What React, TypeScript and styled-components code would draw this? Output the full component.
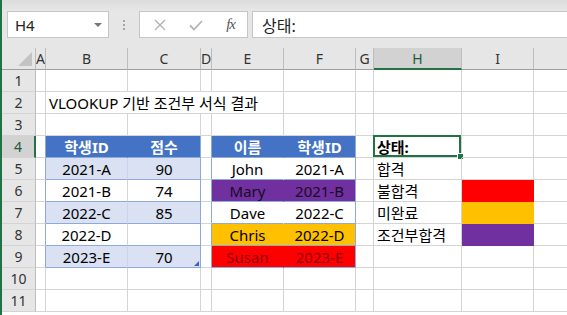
import styled, { createGlobalStyle } from "styled-components";

const GlobalStyle = createGlobalStyle`
  html, body {
    margin: 0;
    padding: 0;
    background: #ffffff;
  }
  body {
    font-family: "Noto Sans", "Noto Sans CJK KR", sans-serif;
  }
`;

const GRID = "#d4d4d4";
const BLUE = "#4472c4";
const BAND = "#d9e1f2";
const LINE = "#8ea9db";
const GREEN = "#217346";
const PURPLE = "#7030a0";
const ORANGE = "#ffc000";
const RED = "#ff0000";

const Window = styled.div`
  width: 567px;
  height: 315px;
  overflow: hidden;
  border-left: 2px solid ${GREEN};
  box-sizing: border-box;
  background: #ffffff;
`;

const Toolbar = styled.div`
  height: 48px;
  box-sizing: border-box;
  padding: 11px 0 10px 5px;
  display: flex;
  align-items: stretch;
  background: linear-gradient(#dcdcdc 0px, #e6e6e6 10px);
`;

const Box = styled.div`
  background: #ffffff;
  border: 1px solid #c6c6c6;
  box-sizing: border-box;
  display: flex;
  align-items: center;
`;

const NameBox = styled(Box)`
  width: 102px;
  padding: 0 6px 0 7px;
  justify-content: space-between;
  font-size: 15px;
  color: #222;
`;

const Arrow = styled.span`
  width: 0;
  height: 0;
  border-left: 4px solid transparent;
  border-right: 4px solid transparent;
  border-top: 4px solid #777;
`;

const Grip = styled.div`
  width: 30px;
  display: flex;
  flex-direction: column;
  align-items: center;
  justify-content: center;
  gap: 2px;
`;

const Dot = styled.span`
  width: 2px;
  height: 2px;
  background: #a6a6a6;
`;

const FxBox = styled(Box)`
  width: 109px;
  padding: 0 12px 0 14px;
  justify-content: space-between;
`;

const Fx = styled.span`
  font-family: "Liberation Serif", "DejaVu Serif", serif;
  font-style: italic;
  font-size: 15px;
  color: #555;
  letter-spacing: -1px;
`;

const FormulaBox = styled(Box)`
  flex: 1;
  margin-left: 4px;
  border-right: none;
  padding-left: 9px;
  font-size: 16px;
  color: #222;
`;

const Sheet = styled.div`
  display: grid;
  grid-template-columns: 34px 10px 82px 73px 11px 72px 72px 18px 88px 72px 72px;
  grid-template-rows: 22px;
  grid-auto-rows: 22px;
`;

const Corner = styled.div`
  background: #e6e6e6;
  border-right: 1px solid #bdbdbd;
  border-bottom: 1px solid #9f9f9f;
  box-sizing: border-box;
  display: flex;
  align-items: flex-end;
  justify-content: flex-end;
  padding: 0 3px 3px 0;
`;

const CornerMark = styled.span`
  width: 0;
  height: 0;
  border-left: 14px solid transparent;
  border-bottom: 14px solid #c3c3c3;
`;

const ColHead = styled.div<{ $on?: boolean }>`
  background: ${(p) => (p.$on ? "#d2d2d2" : "#e6e6e6")};
  border-right: 1px solid #bdbdbd;
  border-bottom: ${(p) => (p.$on ? `2px solid ${GREEN}` : "1px solid #9f9f9f")};
  box-sizing: border-box;
  display: flex;
  align-items: center;
  justify-content: center;
  font-size: 14px;
  color: ${(p) => (p.$on ? "#1d5b38" : "#333")};
  overflow: hidden;
`;

const RowHead = styled.div<{ $on?: boolean }>`
  background: ${(p) => (p.$on ? "#d2d2d2" : "#e6e6e6")};
  border-right: ${(p) => (p.$on ? `2px solid ${GREEN}` : "1px solid #bdbdbd")};
  border-bottom: 1px solid ${GRID};
  box-sizing: border-box;
  display: flex;
  align-items: center;
  justify-content: center;
  font-size: 14px;
  color: ${(p) => (p.$on ? "#1d5b38" : "#333")};
`;

const Cell = styled.div<{
  $fill?: string;
  $align?: string;
  $bold?: boolean;
  $ink?: string;
  $rc?: string;
  $bc?: string;
  $span?: number;
}>`
  position: relative;
  grid-column: span ${(p) => p.$span || 1};
  background: ${(p) => p.$fill || "transparent"};
  border-right: 1px solid ${(p) => p.$rc || p.$fill || GRID};
  border-bottom: 1px solid ${(p) => p.$bc || p.$fill || GRID};
  box-sizing: border-box;
  display: flex;
  align-items: center;
  justify-content: ${(p) => p.$align || "flex-start"};
  padding: 1px 3px 0 3px;
  font-size: 15px;
  font-weight: ${(p) => (p.$bold ? 700 : 400)};
  color: ${(p) => p.$ink || "#000"};
  white-space: nowrap;
  line-height: 1;
`;

const Selection = styled.span`
  position: absolute;
  left: -1px;
  top: -1px;
  right: 0;
  bottom: 0;
  border: 2px solid ${GREEN};
  pointer-events: none;
  &::after {
    content: "";
    position: absolute;
    right: -5px;
    bottom: -5px;
    width: 5px;
    height: 5px;
    background: ${GREEN};
    border: 1px solid #fff;
  }
`;

const Handle = styled.span`
  position: absolute;
  right: 1px;
  bottom: 1px;
  width: 0;
  height: 0;
  border-left: 5px solid transparent;
  border-bottom: 5px solid #3e63b0;
`;

type C = {
  t?: string;
  fill?: string;
  align?: string;
  bold?: boolean;
  ink?: string;
  rc?: string;
  bc?: string;
  span?: number;
  sel?: boolean;
  handle?: boolean;
};

const head = (t: string, rc?: string): C => ({
  t,
  fill: BLUE,
  align: "center",
  bold: true,
  ink: "#fff",
  bc: LINE,
  rc,
});

const scores: [string, string, boolean][] = [
  ["2021-A", "90", true],
  ["2021-B", "74", false],
  ["2022-C", "85", true],
  ["2022-D", "", false],
  ["2023-E", "70", true],
];

const people: [string, string, string, string][] = [
  ["John", "2021-A", "#ffffff", "#000"],
  ["Mary", "2021-B", PURPLE, "#1a0a22"],
  ["Dave", "2022-C", "#ffffff", "#000"],
  ["Chris", "2022-D", ORANGE, "#000"],
  ["Susan", "2023-E", RED, "#8a0006"],
];

const statuses: [string, string?][] = [
  ["합격"],
  ["불합격", RED],
  ["미완료", ORANGE],
  ["조건부합격", PURPLE],
];

function buildRows(): C[][] {
  const rows: C[][] = [];
  const empty = (): C[] => Array.from({ length: 10 }, () => ({}));

  rows.push(empty());
  rows.push([
    {},
    { t: "VLOOKUP 기반 조건부 서식 결과", span: 4 },
    {},
    {},
    {},
    {},
    {},
  ]);
  rows.push(empty());
  rows.push([
    { rc: LINE },
    head("학생ID"),
    head("점수", LINE),
    { rc: LINE },
    head("이름"),
    head("학생ID", LINE),
    {},
    { t: "상태:", bold: true, sel: true },
    {},
    {},
  ]);

  for (let i = 0; i < 5; i++) {
    const [id, score, band] = scores[i];
    const [name, pid, fill, ink] = people[i];
    const st = statuses[i];
    rows.push([
      { rc: LINE },
      { t: id, align: "center", fill: band ? BAND : undefined, bc: LINE, rc: band ? "#c9d5ee" : GRID },
      { t: score, align: "center", fill: band ? BAND : undefined, bc: LINE, rc: LINE, handle: i === 4 },
      { rc: LINE },
      { t: name, align: "center", fill, ink, bc: LINE, rc: fill },
      { t: pid, align: "center", fill, ink, bc: LINE, rc: LINE },
      {},
      { t: st ? st[0] : undefined },
      { fill: st ? st[1] : undefined },
      {},
    ]);
  }

  rows.push(empty());
  rows.push(empty());
  return rows;
}

// the tenth column (J) runs off the window edge, so its letter is not shown
const COLS = ["A", "B", "C", "D", "E", "F", "G", "H", "I", ""];

export default function App() {
  const rows = buildRows();
  return (
    <Window>
      <GlobalStyle />
      <Toolbar>
        <NameBox>
          H4
          <Arrow />
        </NameBox>
        <Grip>
          <Dot />
          <Dot />
          <Dot />
        </Grip>
        <FxBox>
          <svg width="12" height="12" viewBox="0 0 12 12">
            <path d="M1 1 L11 11 M11 1 L1 11" stroke="#b4b4b4" strokeWidth="1.4" fill="none" />
          </svg>
          <svg width="14" height="12" viewBox="0 0 14 12">
            <path d="M1 6.5 L5 10.5 L13 2" stroke="#b4b4b4" strokeWidth="1.8" fill="none" />
          </svg>
          <Fx>fx</Fx>
        </FxBox>
        <FormulaBox>상태:</FormulaBox>
      </Toolbar>
      <Sheet>
        <Corner>
          <CornerMark />
        </Corner>
        {COLS.map((c, i) => (
          <ColHead key={`c${i}`} $on={c === "H"}>
            {c}
          </ColHead>
        ))}
        {rows.map((row, r) => [
          <RowHead key={`h${r}`} $on={r === 3}>
            {r + 1}
          </RowHead>,
          ...row.map((c, i) => (
            <Cell
              key={`${r}-${i}`}
              $fill={c.fill}
              $align={c.align}
              $bold={c.bold}
              $ink={c.ink}
              $rc={c.rc}
              $bc={c.bc}
              $span={c.span}
            >
              {c.t}
              {c.sel && <Selection />}
              {c.handle && <Handle />}
            </Cell>
          )),
        ])}
      </Sheet>
    </Window>
  );
}
